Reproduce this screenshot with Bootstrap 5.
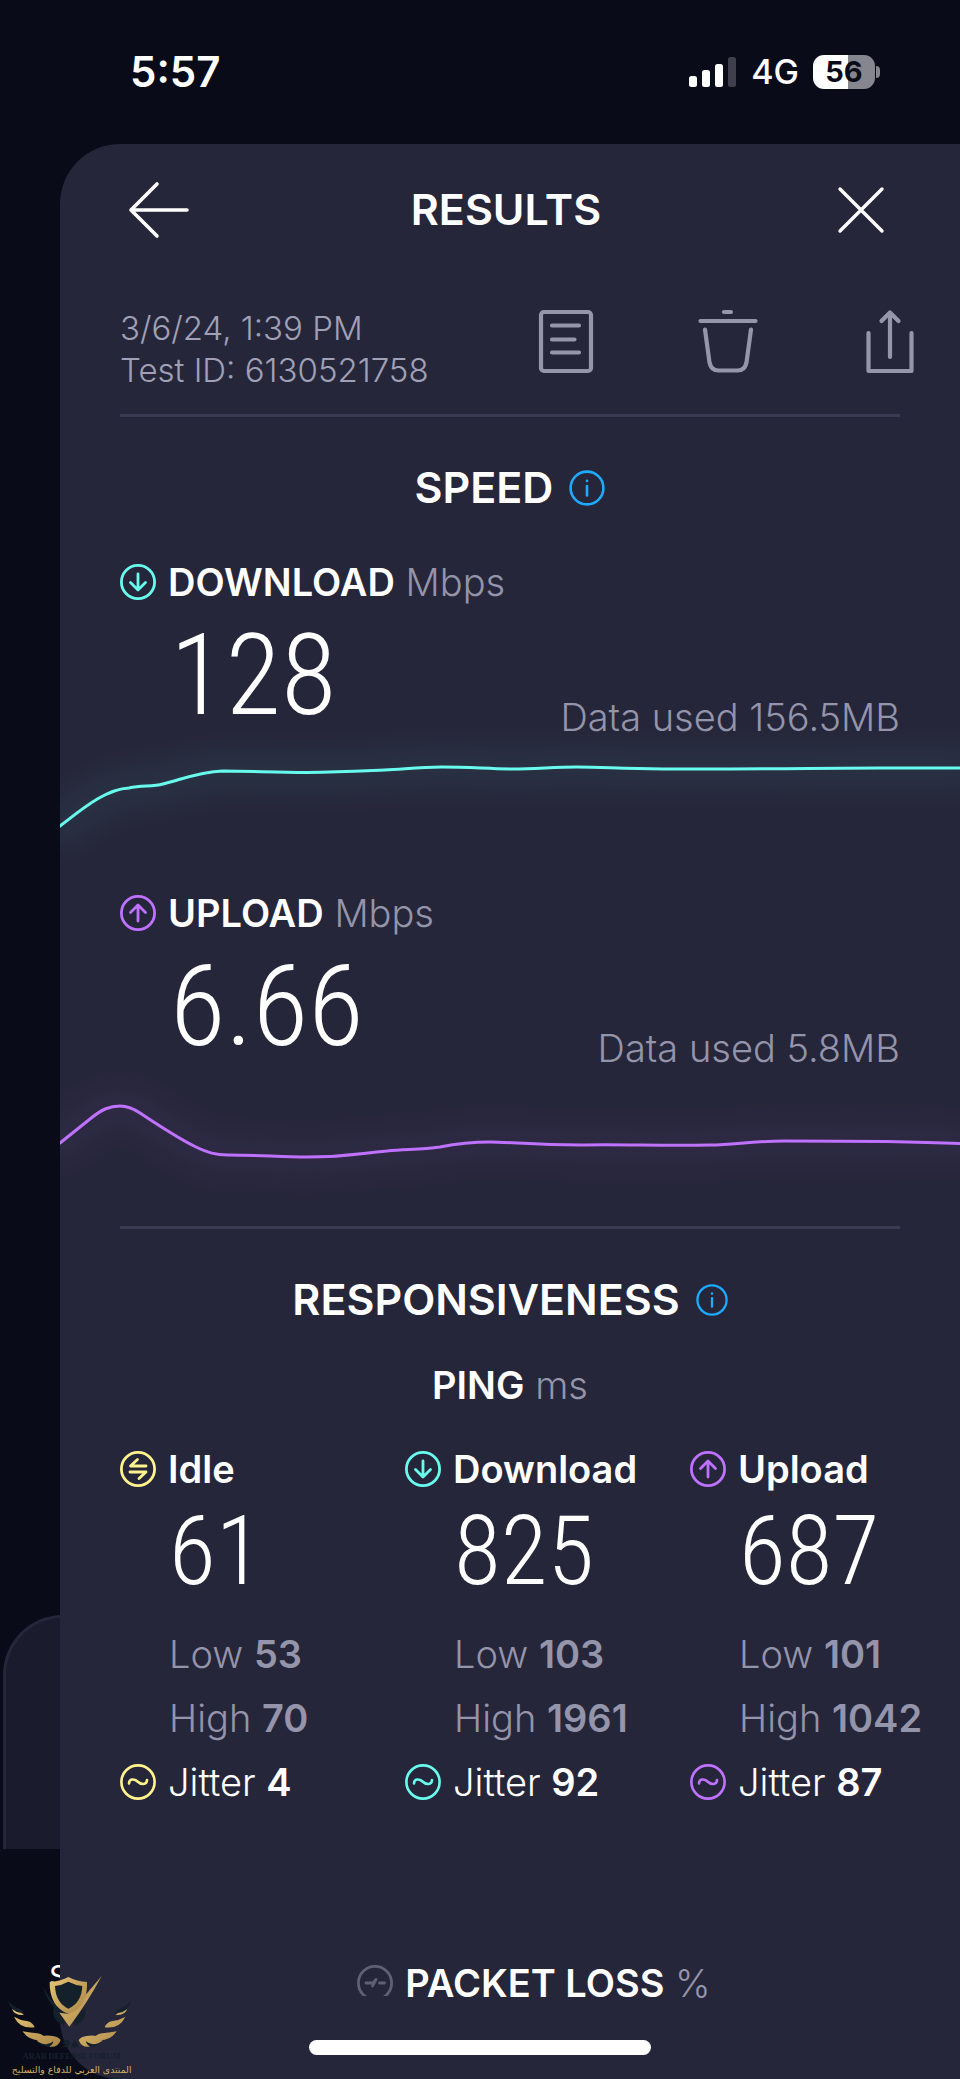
<!DOCTYPE html>
<html lang="en">
<head>
<meta charset="utf-8">
<meta name="viewport" content="width=device-width, initial-scale=1">
<title>Speed test results</title>
<link rel="stylesheet" href="https://cdn.jsdelivr.net/npm/bootstrap@5.3.0/dist/css/bootstrap.min.css">
<script defer src="https://cdn.jsdelivr.net/npm/bootstrap@5.3.0/dist/js/bootstrap.bundle.min.js"></script>
<style>
  :root { --night: #0a0b19; --panel: #26263a; --rule: #3a3a52; --muted: #9494aa;
          --aqua: #68fcee; --violet: #bf71ff; --sand: #fff38e; --sky: #1cabff; }
  body { background: var(--night); color: #fff; font-family: Inter, "Liberation Sans", sans-serif; font-size: 38px; line-height: 46px; }
  svg { display: block; flex: none; fill: none; stroke: currentColor; stroke-linecap: round; stroke-linejoin: round; }
  .page { overflow: hidden; min-height: 100vh; }
  .status { height: 144px; padding: 0 80px 0 130px; font-size: 42px; }
  .signal { stroke: none; }
  .carrier { font-size: 34px; margin: 0 14px; }
  .battery { width: 62px; height: 34px; border-radius: 11px; font-size: 29px; color: var(--night);
             background: linear-gradient(90deg, #fff 56%, #86868e 56%); }
  .battery-tip { width: 4px; height: 12px; margin-left: 1px; border-radius: 0 4px 4px 0; background: #86868e; }
  .panel { margin-left: 60px; background: var(--panel); border-radius: 60px 0 0 60px; overflow: hidden; }
  .head { display: grid; grid-template-columns: 1fr auto 1fr; align-items: center; height: 132px; padding: 0 74px 0 66px; }
  .head h1, .title h2 { margin: 0; font-size: 43px; font-weight: 600; }
  .plain { padding: 0; border: 0; background: none; color: inherit; }
  .meta { padding: 31px 38px 23px 60px; font-size: 33px; line-height: 42px; font-weight: 300; color: #a0a0b6; }
  .meta .tools { gap: 98px; padding-top: 2px; color: #9696ab; }
  .rule { height: 3px; margin: 0 60px; background: var(--rule); }
  .title { height: 142px; }
  .inset { padding: 0 60px; }
  .strong-label { font-size: inherit; line-height: inherit; font-weight: 600; margin: 0; }
  .label-row { gap: 12px; }
  .soft { color: var(--muted); font-weight: 300; }
  .soft b, .jitter b { font-weight: 600; }
  .figure-lg, .figure-md { font-family: "Roboto Condensed", "Liberation Sans", sans-serif; font-weight: 300; }
  .figure-lg { font-size: 114px; line-height: 140px; padding-left: 50px; }
  .figure-md { font-size: 96px; line-height: 118px; padding-left: 49px; margin-bottom: 12px; }
  .used { line-height: 56px; }
  .chart { width: 100%; overflow: visible; stroke-width: 3; }
  .chart .glow { stroke-width: 40; opacity: .05; filter: blur(14px); }
  .chart-down { height: 145px; }
  .chart-up { height: 150px; }
  .ping { line-height: 28px; margin-bottom: 47px; }
  .columns { display: grid; grid-template-columns: repeat(3, 1fr); margin: 0 -15px 0 60px; }
  .line { line-height: 64px; padding-left: 49px; white-space: nowrap; }
  .jitter { line-height: 64px; font-weight: 300; }
  .loss { margin: 146px 0 34px 48px; }
  .loss-icon { height: 36px; padding-top: 5px; overflow: hidden; }
  .homebar { width: 342px; height: 15px; border-radius: 8px; background: #fff; }
  .homewrap { margin-left: -60px; padding-bottom: 24px; }
  .aqua { color: var(--aqua); } .violet { color: var(--violet); } .sand { color: var(--sand); } .sky { color: var(--sky); } .dim { color: #606075; }
  /* history screen peeking out behind the panel */
  .behind-card { left: 3px; bottom: 230px; width: 120px; height: 234px; background: #1b1b2e; border: 3px solid #26263a; border-bottom: 0; border-right: 0; border-radius: 60px 0 0 0; }
  .behind-text { left: 49px; bottom: 80px; font-size: 30px; line-height: 46px; }
  .forum { left: 0; bottom: 0; width: 140px; height: 119px; stroke: none; }
</style>
</head>
<body>
<svg width="0" height="0" class="position-absolute" aria-hidden="true">
  <symbol id="i-down" viewBox="0 0 36 36"><circle cx="18" cy="18" r="16.6" stroke-width="2.8"/><path d="M18 10v15.500M10.500 18.500l7.500 7.500 7.500-7.500" stroke-width="2.800"/></symbol>
  <symbol id="i-up" viewBox="0 0 36 36"><circle cx="18" cy="18" r="16.600" stroke-width="2.800"/><path d="M18 26V10.500M10.500 17.500l7.500-7.500 7.500 7.500" stroke-width="2.800"/></symbol>
  <symbol id="i-idle" viewBox="0 0 36 36"><circle cx="18" cy="18" r="16.600" stroke-width="2.800"/><path d="M26 15H10.500l7-6.500M10 21h16l-7 6.500" stroke-width="2.800"/></symbol>
  <symbol id="i-jit" viewBox="0 0 36 36"><circle cx="18" cy="18" r="16.600" stroke-width="2.600"/><path d="M9 19.500c0-5 5.500-5 8.500-2s9.500 4 9.500-1.500" stroke-width="2.600"/></symbol>
  <symbol id="i-info" viewBox="0 0 36 36"><circle cx="18" cy="18" r="16.400" stroke-width="2.600"/><path d="M18 16v9.500M18 10.700v.3" stroke-width="2.600"/></symbol>
</svg>

<div class="page position-relative">
  <div class="behind-card position-absolute"></div>
  <div class="behind-text position-absolute">S</div>

  <header class="status d-flex align-items-center justify-content-between">
    <span class="fw-semibold">5:57</span>
    <div class="d-flex align-items-center">
      <svg class="signal" width="48" height="32" viewBox="0 0 48 32" role="img" aria-label="Signal"><g fill="#fff"><rect y="20" width="8" height="11" rx="2.500"/><rect x="13" y="14" width="8" height="17" rx="2.500"/><rect x="26" y="8" width="8" height="23" rx="2.500"/></g><rect x="39" y="1" width="8" height="30" rx="2.500" fill="#3f404b"/></svg>
      <span class="carrier fw-medium">4G</span>
      <span class="battery d-flex align-items-center justify-content-center fw-bold">56</span><span class="battery-tip"></span>
    </div>
  </header>

  <main class="panel position-relative">
    <div class="head">
      <button class="plain d-flex" type="button" aria-label="Back"><svg width="64" height="60" viewBox="0 0 64 60" stroke-width="3.600"><path d="M31 4L5 30l26 26M5 30h56"/></svg></button>
      <h1>RESULTS</h1>
      <button class="plain d-flex ms-auto" type="button" aria-label="Close"><svg width="50" height="50" viewBox="0 0 50 50" stroke-width="3.400"><path d="M4 4l42 42M46 4L4 46"/></svg></button>
    </div>

    <div class="meta d-flex justify-content-between align-items-start">
      <div>3/6/24, 1:39 PM<br>Test ID: 6130521758</div>
      <div class="tools d-flex">
        <button class="plain" type="button" aria-label="Details"><svg width="64" height="66" viewBox="0 0 64 66" stroke-width="4.200"><rect x="7" y="3" width="50" height="59" rx="3"/><path d="M18 16.500h27M18 30.500h22.500M18 43.500h27"/></svg></button>
        <button class="plain" type="button" aria-label="Delete"><svg width="64" height="66" viewBox="0 0 64 66" stroke-width="4.200"><path d="M28 3h7M4.500 12h55M9 20.500l4.500 33c1 5 4 8 9 8h19c5 0 8-3 9-8l4.500-33"/></svg></button>
        <button class="plain" type="button" aria-label="Share"><svg width="64" height="66" viewBox="0 0 64 66" stroke-width="4.200"><path d="M10.500 24v38h43V24M32 48V3.500M23.500 12l8.500-8.500 8.500 8.500"/></svg></button>
      </div>
    </div>
    <div class="rule"></div>

    <section>
      <div class="title d-flex align-items-center justify-content-center gap-3">
        <h2>SPEED</h2><a href="#" class="sky" aria-label="About speed"><svg width="36" height="36"><use href="#i-info"/></svg></a>
      </div>
      <div class="inset">
        <div class="label-row d-flex align-items-center"><svg class="aqua" width="36" height="36"><use href="#i-down"/></svg><div><span class="strong-label">DOWNLOAD</span> <span class="soft">Mbps</span></div></div>
        <div class="d-flex justify-content-between align-items-end"><div class="figure-lg">128</div><div class="soft used">Data used 156.5MB</div></div>
      </div>
      <svg class="chart chart-down aqua" viewBox="0 0 900 145" preserveAspectRatio="none">
        <path class="glow" d="M0 81C20 66 45 44 69 43C82 40 92 42 103 39C120 35 138 27 163 26C190 26 215 27.500 247 27.500C280 27 300 26 325 25C345 24 360 22 382 22C410 22 430 24 453 24C475 24 495 22 517 22C545 22 560 24 603 24C700 24.500 760 23 821 23H900"/>
        <path d="M0 81C20 66 45 44 69 43C82 40 92 42 103 39C120 35 138 27 163 26C190 26 215 27.500 247 27.500C280 27 300 26 325 25C345 24 360 22 382 22C410 22 430 24 453 24C475 24 495 22 517 22C545 22 560 24 603 24C700 24.500 760 23 821 23H900"/>
      </svg>
      <div class="inset">
        <div class="label-row d-flex align-items-center"><svg class="violet" width="36" height="36"><use href="#i-up"/></svg><div><span class="strong-label">UPLOAD</span> <span class="soft">Mbps</span></div></div>
        <div class="d-flex justify-content-between align-items-end"><div class="figure-lg">6.66</div><div class="soft used">Data used 5.8MB</div></div>
      </div>
      <svg class="chart chart-up violet" viewBox="0 0 900 150" preserveAspectRatio="none">
        <path class="glow" d="M0 67L30 43C42 33 50 30 60 30C68 30 74 33 80 37C95 47 118 62 134 70C148 77 156 79 168 79C200 79 220 81 247 81C290 81 300 77 327 75C345 73 360 74 380 71C400 67 410 66 430 66C450 66 475 69 520 69C560 68 600 70 650 69C675 69 690 65 725 65C780 65 840 65 900 67.500"/>
        <path d="M0 67L30 43C42 33 50 30 60 30C68 30 74 33 80 37C95 47 118 62 134 70C148 77 156 79 168 79C200 79 220 81 247 81C290 81 300 77 327 75C345 73 360 74 380 71C400 67 410 66 430 66C450 66 475 69 520 69C560 68 600 70 650 69C675 69 690 65 725 65C780 65 840 65 900 67.500"/>
      </svg>
    </section>
    <div class="rule"></div>

    <section>
      <div class="title d-flex align-items-center justify-content-center gap-3">
        <h2>RESPONSIVENESS</h2><a href="#" class="sky" aria-label="About responsiveness"><svg width="32" height="32"><use href="#i-info"/></svg></a>
      </div>
      <div class="ping text-center"><span class="strong-label">PING</span> <span class="soft">ms</span></div>
      <div class="columns">
        <div>
          <div class="label-row d-flex align-items-center"><svg class="sand" width="36" height="36"><use href="#i-idle"/></svg><h3 class="strong-label">Idle</h3></div>
          <div class="figure-md">61</div>
          <div class="line soft">Low <b>53</b></div>
          <div class="line soft">High <b>70</b></div>
          <div class="label-row jitter d-flex align-items-center"><svg class="sand" width="36" height="36"><use href="#i-jit"/></svg><div>Jitter <b>4</b></div></div>
        </div>
        <div>
          <div class="label-row d-flex align-items-center"><svg class="aqua" width="36" height="36"><use href="#i-down"/></svg><h3 class="strong-label">Download</h3></div>
          <div class="figure-md">825</div>
          <div class="line soft">Low <b>103</b></div>
          <div class="line soft">High <b>1961</b></div>
          <div class="label-row jitter d-flex align-items-center"><svg class="aqua" width="36" height="36"><use href="#i-jit"/></svg><div>Jitter <b>92</b></div></div>
        </div>
        <div>
          <div class="label-row d-flex align-items-center"><svg class="violet" width="36" height="36"><use href="#i-up"/></svg><h3 class="strong-label">Upload</h3></div>
          <div class="figure-md">687</div>
          <div class="line soft">Low <b>101</b></div>
          <div class="line soft">High <b>1042</b></div>
          <div class="label-row jitter d-flex align-items-center"><svg class="violet" width="36" height="36"><use href="#i-jit"/></svg><div>Jitter <b>87</b></div></div>
        </div>
      </div>
      <div class="loss label-row d-flex align-items-start justify-content-center">
        <div class="loss-icon"><svg class="dim" width="36" height="36" viewBox="0 0 36 36" stroke-width="2.800"><circle cx="18" cy="18" r="16.600"/><path d="M9 18h7l3-3.500M15.500 21l3.500-6.500M22.500 18h5"/></svg></div>
        <div><span class="strong-label">PACKET LOSS</span> <span class="soft">%</span></div>
      </div>
    </section>
    <div class="homewrap d-flex justify-content-center"><div class="homebar"></div></div>
  </main>

  <svg class="forum position-absolute" viewBox="0 0 420 357" role="img" aria-label="Arab Defense Forum">
    <defs><linearGradient id="gold" x1="0" x2="1" y2="1"><stop offset="0" stop-color="#e6c577"/><stop offset="1" stop-color="#a88445"/></linearGradient></defs>
    <g fill="#14212b">
      <path d="M128 80q30 50 75 92l-20-4q-40-40-55-88zM160 144l35 30-3 22q-28-10-32-34zM256 144l-35 30 3 22q28-10 32-34z"/>
      <path d="M24 122q12 16 40 27l8 14q-38-4-48-41zM393 122q-12 16-40 27l-8 14q38-4 48-41z"/>
      <path d="M108 242q20 18 46 20 20-4 26-18l-24-8-20 10zM310 242q-20 18-46 20-20-4-26-18l24-8 20 10z"/>
    </g>
    <g fill="url(#gold)">
      <path d="M305 48q-40 76-97 152l-30-42 28 4q50-55 99-114z"/>
      <path d="M149 66q30-2 56-15 26 13 56 15 3 75-55 96-58-21-57-96z"/>
      <path d="M36 147q12 10 28 12l8 6q-28 2-36-18zM42 170q20 12 42 14 14 4 20 18-44 6-62-32zM68 214q24 4 44 6 20 4 30 18-50 12-74-24zM110 242q16-20 48-14 16 2 24 12-8 24-34 20 12-8 12-16-20 18-50-2z"/>
      <path d="M382 147q-12 10-28 12l-8 6q28 2 36-18zM376 170q-20 12-42 14-14 4-20 18 44 6 62-32zM350 214q-24 4-44 6-20 4-30 18 50 12 74-24zM308 242q-16-20-48-14-16 2-24 12 8 24 34 20-12-8-12-16 20 18 50-2z"/>
    </g>
    <path fill="#14212b" d="M165 78q22-3 40-13 20 10 42 13-2 50-42 68-38-18-40-68z"/>
    <path fill="#14212b" d="M190 240h14q10 10 0 22h-14v-6h12v-4h-12zM212 262l12-24 12 24z"/>
    <text x="215" y="297" text-anchor="middle" font-family="Liberation Serif, serif" font-weight="700" font-size="25" fill="#14212b">ARAB DEFENSE FORUM</text>
    <text x="215" y="339" text-anchor="middle" direction="rtl" font-family="DejaVu Sans, sans-serif" font-size="28" fill="#d2b067">المنتدى العربي للدفاع والتسليح</text>
  </svg>
</div>
</body>
</html>
